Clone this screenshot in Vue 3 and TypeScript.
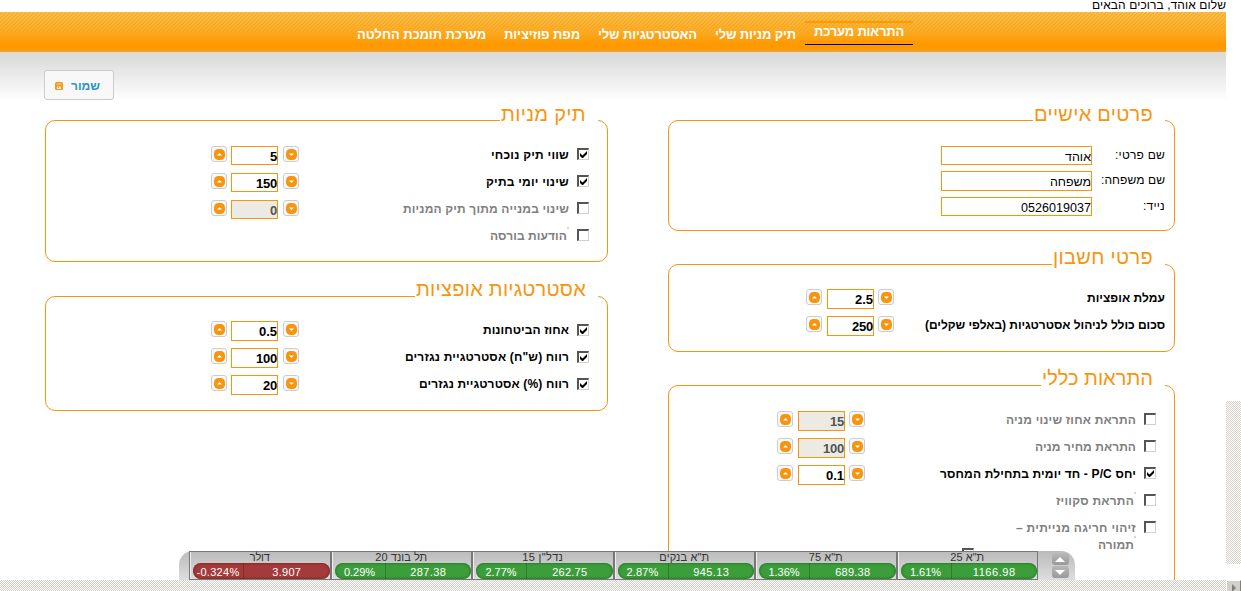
<script setup lang="ts">
import type { Directive } from 'vue'

interface Row {
  label: string
  width: number
  check?: boolean
  off?: boolean
  value?: string
  valueWidth?: number
  dot?: boolean
  second?: string
}
interface Panel {
  title: string
  titleWidth: number
  name: string
  rows: Row[]
}

// Tracks a line of text so that it takes the given width.
const vFit: Directive<HTMLElement, number> = {
  mounted(el, { value }) {
    const count = Array.from(el.textContent ?? '').length
    const natural = el.getBoundingClientRect().width
    if (count) el.style.letterSpacing = `${(value - natural) / count}px`
  },
}

const nav = [
  { text: 'התראות מערכת', width: 90, active: true },
  { text: 'תיק מניות שלי', width: 81 },
  { text: 'האסטרטגיות שלי', width: 99 },
  { text: 'מפת פוזיציות', width: 76 },
  { text: 'מערכת תומכת החלטה', width: 129 },
]

const personal = [
  { label: 'שם פרטי:', width: 50, value: 'אוהד', valueWidth: 26 },
  { label: 'שם משפחה:', width: 64, value: 'משפחה', valueWidth: 41 },
  { label: 'נייד:', width: 22, value: '0526019037', valueWidth: 70 },
]

const rightPanels: Panel[] = [
  {
    title: 'פרטי חשבון', titleWidth: 100, name: 'account',
    rows: [
      { label: 'עמלת אופציות', width: 78, value: '2.5', valueWidth: 18 },
      { label: 'סכום כולל לניהול אסטרטגיות (באלפי שקלים)', width: 240, value: '250', valueWidth: 21 },
    ],
  },
  {
    title: 'התראות כללי', titleWidth: 111, name: 'general',
    rows: [
      { label: 'התראת אחוז שינוי מניה', width: 130, check: false, off: true, value: '15', valueWidth: 14 },
      { label: 'התראת מחיר מניה', width: 101, check: false, off: true, value: '100', valueWidth: 21 },
      { label: 'יחס P/C - חד יומית בתחילת המחסר', width: 196, check: true, value: '0.1', valueWidth: 18 },
      { label: 'התראת סקוויז', width: 78, check: false, off: true, dot: true },
      { label: 'זיהוי חריגה מנייתית –', width: 120, check: false, off: true, second: 'תמורה' },
    ],
  },
]

const leftPanels: Panel[] = [
  {
    title: 'תיק מניות', titleWidth: 85, name: 'stocks',
    rows: [
      { label: 'שווי תיק נוכחי', width: 78, check: true, value: '5', valueWidth: 7 },
      { label: 'שינוי יומי בתיק', width: 83, check: true, value: '150', valueWidth: 21 },
      { label: 'שינוי במנייה מתוך תיק המניות', width: 166, check: false, off: true, value: '0', valueWidth: 7 },
      { label: 'הודעות בורסה', width: 77, check: false, off: true, dot: true },
    ],
  },
  {
    title: 'אסטרטגיות אופציות', titleWidth: 170, name: 'options',
    rows: [
      { label: 'אחוז הביטחונות', width: 86, check: true, value: '0.5', valueWidth: 18 },
      { label: 'רווח (ש"ח) אסטרטגיית נגזרים', width: 164, check: true, value: '100', valueWidth: 21 },
      { label: 'רווח (%) אסטרטגיית נגזרים', width: 150, check: true, value: '20', valueWidth: 14 },
    ],
  },
]

const columns = [rightPanels, leftPanels]

const ticker = [
  { name: 'ת"א 25', nameWidth: 34, pct: '1.61%', pctWidth: 31, value: '1166.98', valueWidth: 43 },
  { name: 'ת"א 75', nameWidth: 34, pct: '1.36%', pctWidth: 31, value: '689.38', valueWidth: 35 },
  { name: 'ת"א בנקים', nameWidth: 50, pct: '2.87%', pctWidth: 32, value: '945.13', valueWidth: 36 },
  { name: 'נדל"ן 15', nameWidth: 41, pct: '2.77%', pctWidth: 31, value: '262.75', valueWidth: 35 },
  { name: 'תל בונד 20', nameWidth: 52, pct: '0.29%', pctWidth: 31, value: '287.38', valueWidth: 36 },
  { name: 'דולר', nameWidth: 20, pct: '-0.324%', pctWidth: 43, value: '3.907', valueWidth: 29, down: true },
]
</script>

<template>
  <div class="page" dir="rtl">
    <div class="hello"><span v-fit="134">שלום אוהד, ברוכים הבאים</span></div>
    <nav class="nav">
      <a v-for="n in nav" :key="n.text" class="nav-item" :class="{ active: n.active }"><span v-fit="n.width">{{ n.text }}</span></a>
    </nav>
    <main class="main">
      <div class="toolbar">
        <button class="save">
          <span v-fit="29">שמור</span>
          <svg width="8" height="8" viewBox="0 0 8 8">
            <rect width="8" height="8" rx="1.5" fill="#f39a1e" />
            <path d="M1.500 2h5" stroke="#fbd08d" stroke-width="1" />
            <path d="M2 4.500h4v2.500H2z" fill="#fff3dc" />
            <path d="M3 5h1v1H3z" fill="#f39a1e" />
          </svg>
        </button>
      </div>
      <div class="columns">
        <div v-for="(column, c) in columns" :key="c" class="column">
          <section v-if="c === 0" class="panel personal">
            <h2 class="title"><span v-fit="119">פרטים אישיים</span></h2>
            <div v-for="p in personal" :key="p.label" class="field">
              <span class="field-label"><span v-fit="p.width">{{ p.label }}</span></span>
              <div class="text-input"><span v-fit="p.valueWidth">{{ p.value }}</span></div>
            </div>
          </section>
          <section v-for="panel in column" :key="panel.name" class="panel" :class="panel.name">
            <h2 class="title"><span v-fit="panel.titleWidth">{{ panel.title }}</span></h2>
            <div v-for="row in panel.rows" :key="row.label" class="row" :class="{ off: row.off }">
              <span v-if="row.check !== undefined" class="box">
                <svg v-if="row.check" width="7" height="7" viewBox="0 0 7 7"><path d="M0 2v3l2 2h1l4-4V0L2.500 4.500z" fill="#000" /></svg>
              </span>
              <div class="label" :class="{ dot: row.dot }">
                <span v-fit="row.width">{{ row.label }}</span>
                <div v-if="row.second" class="second dot"><span v-fit="36">{{ row.second }}</span></div>
              </div>
              <div v-if="row.value" class="spinner">
                <span class="step"><svg width="11" height="11" viewBox="0 0 11 11"><rect width="11" height="11" rx="4.500" fill="#f7950f" /><path d="M3 4.500h5L5.500 7z" fill="#fff" /></svg></span>
                <div class="number"><span v-fit="row.valueWidth ?? 0">{{ row.value }}</span></div>
                <span class="step"><svg width="11" height="11" viewBox="0 0 11 11"><rect width="11" height="11" rx="4.500" fill="#f7950f" /><path d="M3 6.500h5L5.500 4z" fill="#fff" /></svg></span>
              </div>
            </div>
            <span v-if="panel.name === 'general'" class="box extra"></span>
          </section>
        </div>
      </div>
    </main>

    <div class="ticker">
      <div class="arrows">
        <span class="arrow"><svg width="10" height="5" viewBox="0 0 10 5"><path d="M0 5h10L5 0z" fill="#fff" /></svg></span>
        <span class="arrow"><svg width="10" height="5" viewBox="0 0 10 5"><path d="M0 0h10L5 5z" fill="#fff" /></svg></span>
      </div>
      <div class="cells">
        <div v-for="t in ticker" :key="t.name" class="cell">
          <div class="cell-name"><span v-fit="t.nameWidth">{{ t.name }}</span></div>
          <div class="pill" :class="{ down: t.down }" dir="ltr">
            <span class="pct"><span v-fit="t.pctWidth">{{ t.pct }}</span></span>
            <span class="val"><span v-fit="t.valueWidth">{{ t.value }}</span></span>
          </div>
        </div>
      </div>
    </div>
    <div class="vtrack"></div>
    <div class="htrack">
      <span class="scroll-btn"><svg width="4" height="8" viewBox="0 0 4 8"><path d="M0 0v8l4-4z" fill="#808080" /></svg></span>
    </div>
  </div>
</template>

<style>
body {
  margin: 0;
  background: #fff;
  overflow: hidden;
}
</style>

<style scoped>
.page {
  position: relative;
  width: 1241px;
  height: 591px;
  overflow: hidden;
  box-sizing: border-box;
  padding-right: 15px;
  background: #fff;
  font-family: "Liberation Sans", Arial, sans-serif;
  font-size: 12px;
  color: #000;
}
.page span {
  white-space: nowrap;
}
.hello {
  height: 12px;
  line-height: 11px;
  font-size: 12px;
}
.nav {
  box-sizing: border-box;
  height: 40px;
  padding: 9px 313px 0 0;
  display: flex;
  align-items: flex-start;
  background:
    linear-gradient(#e9a23a, #e9a23a) 0 38px / 100% 2px no-repeat,
    linear-gradient(rgba(255, 153, 0, 0), rgba(255, 153, 0, 0.55) 55%, #ff9900 78%),
    repeating-linear-gradient(135deg, #fbbf48 0 1.414px, #f3b23b 1.414px 2.828px);
}
.nav-item {
  box-sizing: border-box;
  height: 24px;
  padding: 0 9px;
  font-size: 13px;
  font-weight: bold;
  line-height: 27px;
  color: #fff;
}
.nav-item.active {
  border-top: 2px solid #ff9900;
  border-bottom: 1px solid #000;
  line-height: 17px;
}
.main {
  height: 539px;
  background: linear-gradient(#f5d9ab 0 1px, #dadada 1px, #dcdcdc 6px, #fff 49px);
}
.toolbar {
  display: flex;
  justify-content: flex-end;
  padding: 18px 0 0 44px;
}
.save {
  box-sizing: border-box;
  width: 70px;
  height: 30px;
  border: 1px solid #ccc;
  border-radius: 3px;
  background: #f8f8f8;
  display: flex;
  align-items: center;
  padding: 2px 13px 0 0;
  gap: 8px;
  font: bold 12px "Liberation Sans", Arial, sans-serif;
  color: #2a93c4;
}
.columns {
  display: flex;
  gap: 60px;
  padding: 20px 51px 0 45px;
}
.column:first-child {
  width: 507px;
}
.column:last-child {
  width: 563px;
}
.panel {
  box-sizing: border-box;
  border: 1px solid #f7950f;
  border-radius: 10px;
}
.title {
  width: max-content;
  height: 26px;
  margin: -19px 9px 0 0;
  padding: 0 12px 0 1px;
  background: linear-gradient(#fff, #fff) 0 17px / 100% 3px no-repeat;
  font-size: 20px;
  font-weight: normal;
  line-height: 25px;
  color: #f7950f;
}
.account .title,
.options .title,
.general .title {
  line-height: 23px;
}
.personal {
  height: 111px;
  margin-bottom: 33px;
}
.account {
  height: 88px;
  margin-bottom: 33px;
}
.general {
  height: 220px;
}
.stocks {
  height: 142px;
  margin-bottom: 34px;
}
.options {
  height: 115px;
}
.field {
  display: flex;
  height: 19px;
  margin: 0 9px 6px 0;
}
.field:first-of-type {
  margin-top: 18px;
}
.field:last-child {
  margin-top: 7px;
}
.field-label {
  width: 73px;
  line-height: 18px;
}
.text-input {
  box-sizing: border-box;
  width: 151px;
  height: 19px;
  border: 1px solid #f7950f;
  font-size: 12.500px;
  line-height: 20px;
}
.field:nth-child(3) .text-input {
  height: 20px;
}
.row {
  display: flex;
  height: 27px;
  padding-right: 18px;
  font-size: 12px;
  font-weight: bold;
}
.title + .row {
  margin-top: 18px;
}
.account .title + .row,
.options .title + .row {
  margin-top: 17px;
}
.account .row {
  padding-right: 9px;
}
.off {
  color: #808080;
}
.box {
  box-sizing: border-box;
  flex: none;
  width: 12px;
  height: 12px;
  margin: 2px 0 0 8px;
  border: solid;
  border-width: 2px 1px 1px 2px;
  border-color: #555 #d4d0c8 #d4d0c8 #555;
  display: flex;
  align-items: center;
  justify-content: center;
}
.options .box {
  margin-top: 3px;
}
.label {
  line-height: 18px;
}
.dot {
  position: relative;
  padding-right: 2px;
}
.dot::before {
  content: "";
  position: absolute;
  top: 0;
  right: 0;
  width: 2px;
  height: 2px;
  background: #d8d8d8;
}
.second {
  margin-top: -1px;
}
.spinner {
  display: flex;
  gap: 4px;
  margin-right: auto;
  margin-left: 165px;
}
.account .spinner {
  margin-left: 137px;
}
.general .spinner {
  margin-left: 108px;
}
.step {
  box-sizing: border-box;
  width: 16px;
  height: 16px;
  border: 1px solid #ccc;
  border-radius: 3px;
  background: #f9f9f9;
  display: flex;
  align-items: center;
  justify-content: center;
}
.number {
  box-sizing: border-box;
  width: 47px;
  height: 20px;
  margin-right: 1px;
  border: 1px solid #f7950f;
  background: #fff;
  font-size: 13px;
  line-height: 20px;
}
.stocks .number {
  height: 19px;
}
.account .number,
.general .number {
  margin: 0 0 0 1px;
}
.off .number {
  background: #ebebe4;
  color: #545454;
}
.extra {
  margin: 2px 200px 0 0;
}
.ticker {
  position: absolute;
  left: 179px;
  top: 551px;
  width: 896px;
  height: 29px;
  box-sizing: border-box;
  padding-left: 10px;
  display: flex;
  justify-content: space-between;
  border-radius: 14px 14px 0 0;
  background: linear-gradient(#bbb, #ddd);
}
.arrows {
  width: 37px;
  box-sizing: border-box;
  padding: 2px 0 0 7px;
  display: flex;
  flex-direction: column;
  align-items: center;
  gap: 1px;
}
.arrow {
  width: 17px;
  height: 12px;
  border-radius: 3px;
  background: linear-gradient(#b8b8b8, #999);
  display: flex;
  align-items: center;
  justify-content: center;
}
.cells {
  flex: 1;
  display: flex;
  box-sizing: border-box;
  border: 1px solid #777;
  border-right: 0;
}
.cell {
  flex: 1;
  box-sizing: border-box;
  border-right: 1px solid #777;
  box-shadow: inset 1px 0 #eee;
}
.cell:not(:last-child) {
  border-left: 1px solid #777;
}
.cell-name {
  height: 11px;
  line-height: 11px;
  font-size: 11px;
  text-align: center;
  color: #333;
}
.pill {
  height: 16px;
  margin: 0 0 0 3px;
  border-radius: 8px;
  display: flex;
  background: #3c9e3b;
  box-shadow: inset 0 0 3px #185f18;
  color: #fff;
  font-size: 11px;
  line-height: 18px;
  text-align: center;
}
.pill.down {
  background: #a43a3a;
  box-shadow: inset 0 0 3px #6a1c1c;
}
.pct {
  width: 51px;
  box-sizing: border-box;
  border-right: 1px solid rgba(0, 0, 0, 0.2);
}
.val {
  flex: 1;
}
.vtrack,
.htrack {
  position: absolute;
  background: repeating-conic-gradient(#d4d0c8 0 25%, #fff 0 50%) 0 0 / 2px 2px;
}
.vtrack {
  right: 0;
  top: 401px;
  width: 15px;
  height: 163px;
}
.htrack {
  left: 0;
  right: 0;
  top: 580px;
  height: 11px;
  display: flex;
}
.scroll-btn {
  box-sizing: border-box;
  width: 15px;
  height: 16px;
  padding: 3px 0 0;
  border: 1px solid #fff;
  border-right-color: #808080;
  background: #d4d0c8;
  display: flex;
  justify-content: center;
}
</style>
